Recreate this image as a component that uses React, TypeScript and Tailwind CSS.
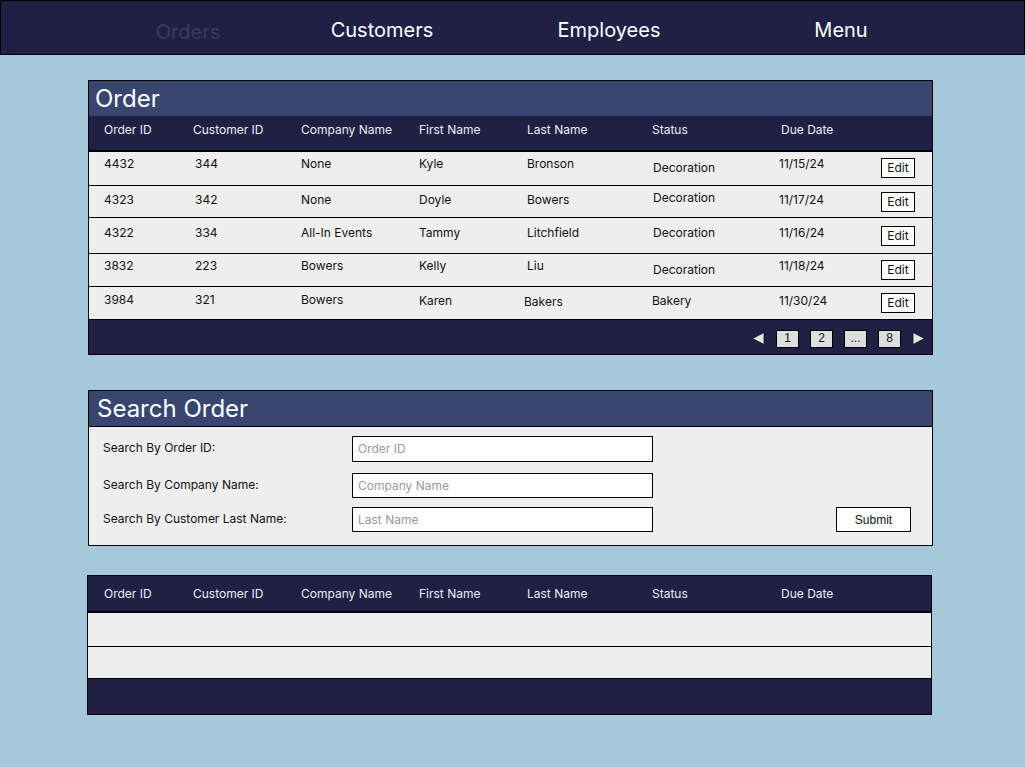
import React from "react";

const NAVY = "bg-[#201f44]";

type Cell = { t: string; c: string };
type Row = { h: string; cells: Cell[]; edit: string };

const rows: Row[] = [
  {
    h: "h-[34px]",
    cells: [
      { t: "4432", c: "pt-[3px]" },
      { t: "344", c: "pt-[3px]" },
      { t: "None", c: "pt-[3px]" },
      { t: "Kyle", c: "pt-[3px]" },
      { t: "Bronson", c: "pt-[3px]" },
      { t: "Decoration", c: "pt-[7px]" },
      { t: "11/15/24", c: "pt-[3px]" },
    ],
    edit: "pt-[5px]",
  },
  {
    h: "h-[32px]",
    cells: [
      { t: "4323", c: "pt-[5px]" },
      { t: "342", c: "pt-[5px]" },
      { t: "None", c: "pt-[5px]" },
      { t: "Doyle", c: "pt-[5px]" },
      { t: "Bowers", c: "pt-[5px]" },
      { t: "Decoration", c: "pt-[3px]" },
      { t: "11/17/24", c: "pt-[5px]" },
    ],
    edit: "pt-[5px]",
  },
  {
    h: "h-[36px]",
    cells: [
      { t: "4322", c: "pt-[6px]" },
      { t: "334", c: "pt-[6px]" },
      { t: "All-In Events", c: "pt-[6px]" },
      { t: "Tammy", c: "pt-[6px]" },
      { t: "Litchfield", c: "pt-[6px]" },
      { t: "Decoration", c: "pt-[6px]" },
      { t: "11/16/24", c: "pt-[6px]" },
    ],
    edit: "pt-[7px]",
  },
  {
    h: "h-[33px]",
    cells: [
      { t: "3832", c: "pt-[3px]" },
      { t: "223", c: "pt-[3px]" },
      { t: "Bowers", c: "pt-[3px]" },
      { t: "Kelly", c: "pt-[3px]" },
      { t: "Liu", c: "pt-[3px]" },
      { t: "Decoration", c: "pt-[7px]" },
      { t: "11/18/24", c: "pt-[3px]" },
    ],
    edit: "pt-[5px]",
  },
  {
    h: "h-[33px]",
    cells: [
      { t: "3984", c: "pt-[4px]" },
      { t: "321", c: "pt-[4px]" },
      { t: "Bowers", c: "pt-[4px]" },
      { t: "Karen", c: "pt-[5px]" },
      { t: "Bakers", c: "pt-[6px] -ml-[3px]" },
      { t: "Bakery", c: "pt-[5px] -ml-[1px]" },
      { t: "11/30/24", c: "pt-[5px]" },
    ],
    edit: "pt-[5px]",
  },
];

const headers = [
  "Order ID",
  "Customer ID",
  "Company Name",
  "First Name",
  "Last Name",
  "Status",
  "Due Date",
];

function TriLeft() {
  return (
    <svg width="13" height="13" viewBox="0 0 13 13">
      <polygon points="12,0.5 12,12.5 0.5,6.5" fill="#e6e6e6" stroke="#111" strokeWidth="0.8" />
    </svg>
  );
}
function TriRight() {
  return (
    <svg width="13" height="13" viewBox="0 0 13 13">
      <polygon points="1,0.5 1,12.5 12.5,6.5" fill="#e6e6e6" stroke="#111" strokeWidth="0.8" />
    </svg>
  );
}

function PageBox({ label }: { label: string }) {
  return (
    <div className="w-[23px] h-[18px] bg-[#dedede] border border-black flex items-center justify-center text-[12px] leading-none text-[#111] font-['Liberation_Sans',sans-serif] pb-[2px]">
      {label}
    </div>
  );
}

function Input({ ph, h }: { ph: string; h: string }) {
  return (
    <div
      className={`w-[301px] ${h} bg-white border border-black flex items-center pl-[5px] text-[12px] text-[#9a9a9a]`}
    >
      {ph}
    </div>
  );
}

export default function App() {
  return (
    <div className="min-h-[767px] w-full bg-[#a5c9da] font-['Inter','Liberation_Sans',sans-serif] pb-[52px]">
      {/* Nav */}
      <div className={`${NAVY} h-[55px] border border-black flex items-center pl-[87px] pt-[4px] text-[20px]`}>
        <div className="w-[200px] text-center text-[#3c3b57] mt-[5px]">Orders</div>
        <div className="w-[188px] text-center text-white">Customers</div>
        <div className="w-[266px] text-center text-white">Employees</div>
        <div className="w-[198px] text-center text-white">Menu</div>
      </div>

      {/* Order panel */}
      <div className="ml-[88px] mt-[25px] w-[845px] border border-black">
        <div className="h-[35px] bg-[#38466f] flex items-center pl-[6px] text-[24px] text-white leading-none">
          Order
        </div>
        <div
          className={`${NAVY} h-[36px] border-b-2 border-black grid grid-cols-[89px_108px_118px_108px_125px_129px_1fr] pl-[15px] pt-[6px] text-[12px] leading-[16px] text-[#ececf2]`}
        >
          {headers.map((h) => (
            <div key={h} className="whitespace-nowrap">
              {h}
            </div>
          ))}
        </div>
        {rows.map((r, i) => (
          <div
            key={i}
            className={`${r.h} bg-[#eeeeee] border-b border-black grid grid-cols-[91px_106px_118px_108px_126px_126px_102px_1fr] pl-[15px] pt-[1px] text-[12px] leading-[16px] text-[#111]`}
          >
            {r.cells.map((c, j) => (
              <div key={j} className={`whitespace-nowrap ${c.c}`}>
                {c.t}
              </div>
            ))}
            <div className={r.edit}>
              <div className="w-[34px] h-[20px] bg-white border border-black flex items-center justify-center text-[12px] text-[#111]">
                Edit
              </div>
            </div>
          </div>
        ))}
        <div className={`${NAVY} h-[34px] flex items-center justify-end gap-[11px] pr-[7px] pt-[3px]`}>
          <TriLeft />
          <PageBox label="1" />
          <PageBox label="2" />
          <PageBox label="..." />
          <PageBox label="8" />
          <TriRight />
        </div>
      </div>

      {/* Search panel */}
      <div className="ml-[88px] mt-[35px] w-[845px] border border-black">
        <div className="h-[36px] bg-[#38466f] border-b border-black flex items-center pl-[8px] text-[24px] text-white leading-none">
          Search Order
        </div>
        <div className="h-[118px] bg-[#eeeeee] pt-[9px] pl-[14px] pr-[21px] text-[12px] text-[#111]">
          <div className="flex items-center">
            <div className="w-[249px] -mt-[2px]">Search By Order ID:</div>
            <Input ph="Order ID" h="h-[26px]" />
          </div>
          <div className="flex items-center mt-[11px]">
            <div className="w-[249px] -mt-[1px]">Search By Company Name:</div>
            <Input ph="Company Name" h="h-[25px]" />
          </div>
          <div className="flex items-center mt-[9px]">
            <div className="w-[249px] -mt-[1px]">Search By Customer Last Name:</div>
            <Input ph="Last Name" h="h-[25px]" />
            <div className="ml-auto w-[75px] h-[25px] bg-white border border-black flex items-center justify-center text-[12px] text-[#111] font-['Liberation_Sans',sans-serif]">
              Submit
            </div>
          </div>
        </div>
      </div>

      {/* Results table */}
      <div className="ml-[87px] mt-[29px] w-[845px] border border-black">
        <div className={`${NAVY} h-[37px] border-b-2 border-black grid grid-cols-[89px_108px_118px_108px_125px_129px_1fr] pl-[16px] pt-[10px] text-[12px] leading-[16px] text-[#ececf2]`}>
          {headers.map((h) => (
            <div key={h} className="whitespace-nowrap">
              {h}
            </div>
          ))}
        </div>
        <div className="h-[34px] bg-[#eeeeee] border-b border-black" />
        <div className="h-[32px] bg-[#eeeeee] border-b border-black" />
        <div className={`${NAVY} h-[35px]`} />
      </div>
    </div>
  );
}
